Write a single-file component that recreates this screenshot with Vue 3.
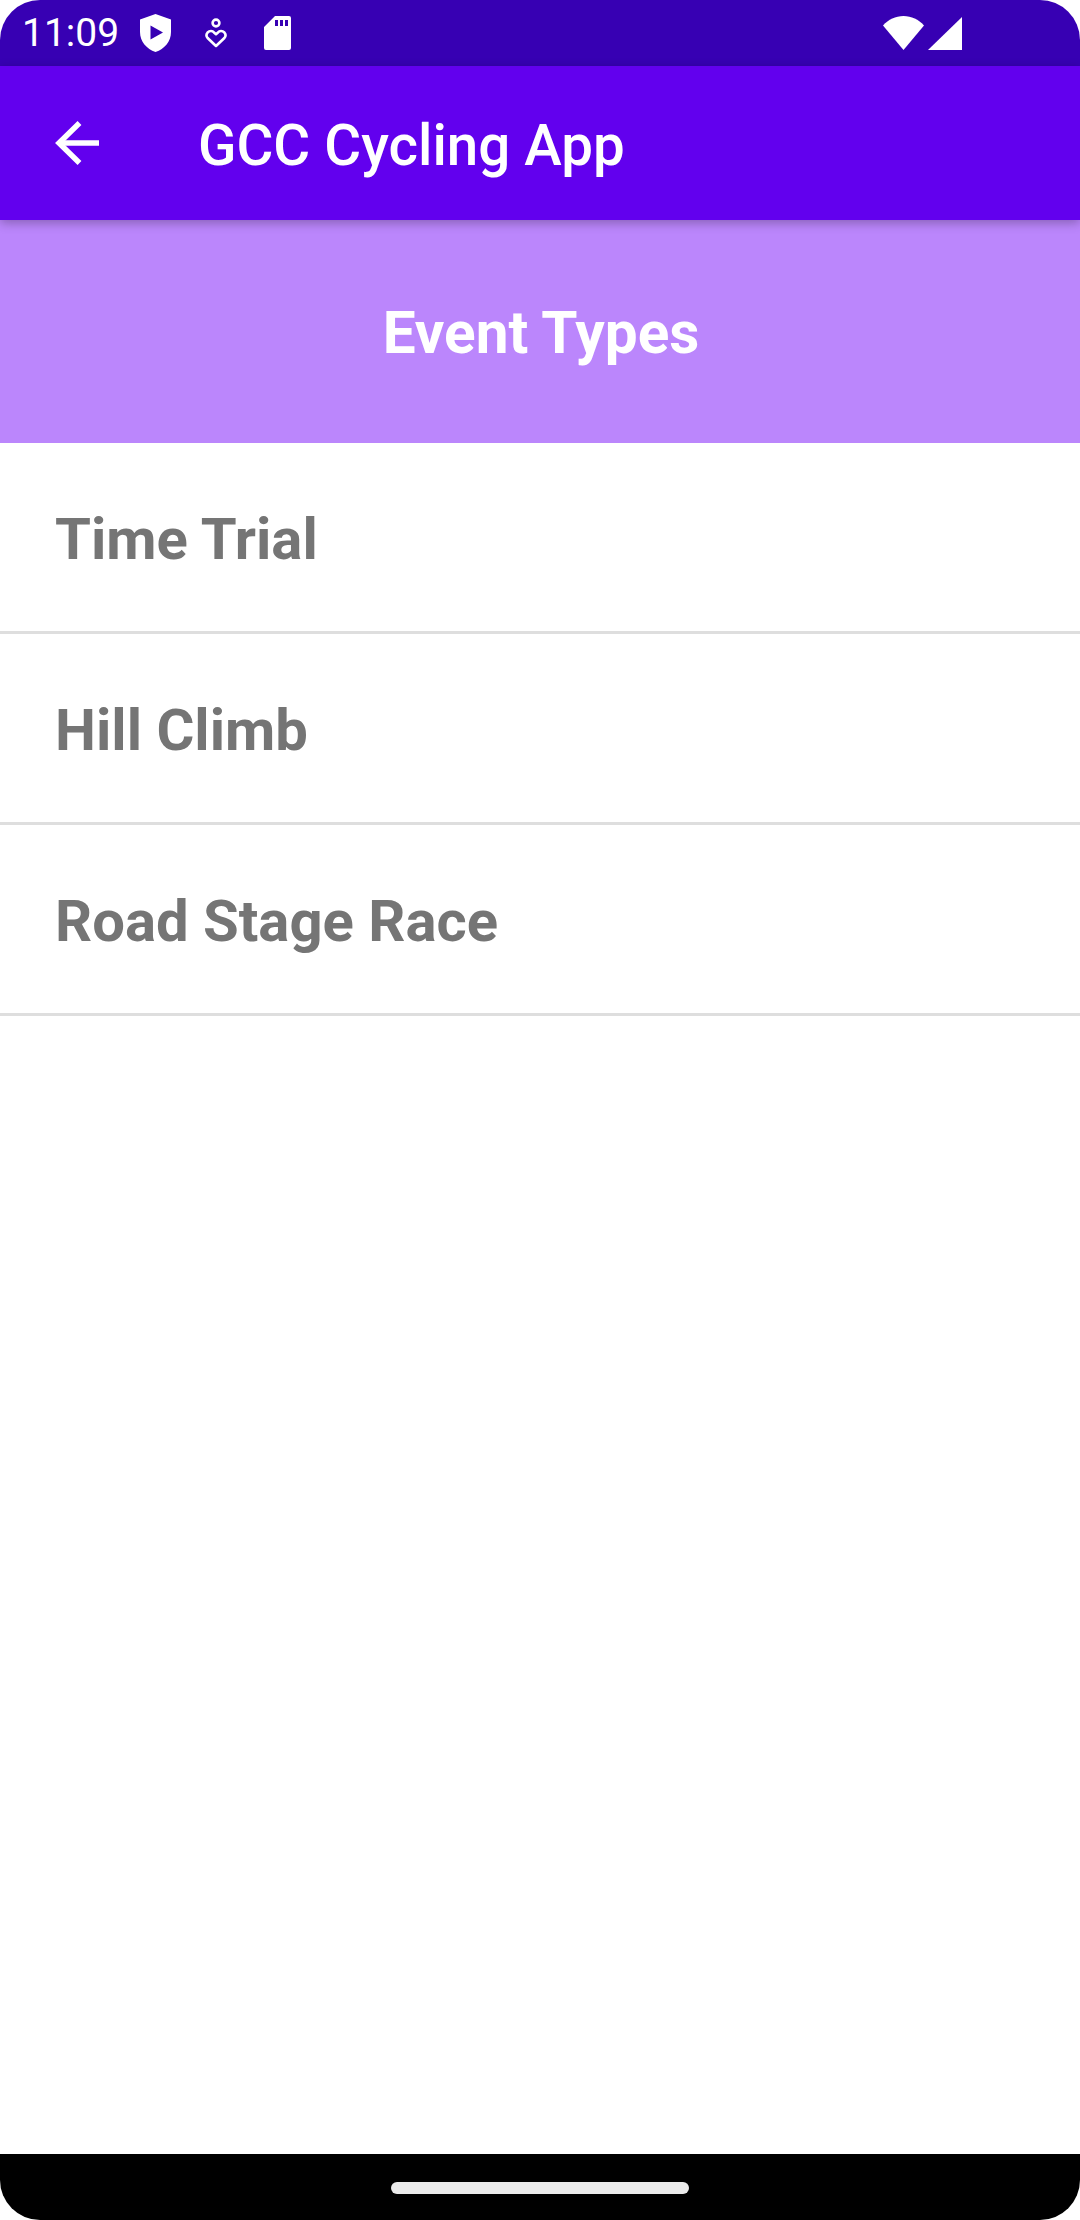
<script setup>
const events = ['Time Trial', 'Hill Climb', 'Road Stage Race']
</script>

<template>
  <div class="screen">
    <div class="status">
      <span class="time">11:09</span>
      <svg class="i-shield" viewBox="0 0 31 38" width="31" height="38">
        <path fill="#fff" fill-rule="evenodd" d="M15.500 0 31 5.500V18c0 9.500-6.500 17-15.500 20C6.500 35 0 27.500 0 18V5.500ZM10.500 11.500v14l12.500-7Z" />
      </svg>
      <svg class="i-heart" viewBox="0 0 22 30" width="22" height="30" fill="none" stroke="#fff" stroke-width="2.600">
        <circle cx="11" cy="5" r="3.400" />
        <path stroke-linejoin="round" d="M11 28 2.600 20a4.300 4.300 0 0 1 0-5.500c2-2 5-1.800 6.400 0l2 1.700 2-1.700c1.400-1.800 4.400-2 6.400 0a4.300 4.300 0 0 1 0 5.500Z" />
      </svg>
      <svg class="i-sd" viewBox="0 0 27 34" width="27" height="34">
        <path fill="#fff" fill-rule="evenodd" d="M11 0H25a2 2 0 0 1 2 2V32a2 2 0 0 1-2 2H2a2 2 0 0 1-2-2V11ZM11 4v6h3V4ZM16 4v6h3V4ZM21 4v6h3V4Z" />
      </svg>
      <span class="spacer"></span>
      <svg class="i-wifi" viewBox="0 0 41 34" width="41" height="34">
        <path fill="#fff" d="M20.500 34 0 9.500C5.500 3.500 12.500 0 20.500 0S35.500 3.500 41 9.500Z" />
      </svg>
      <svg class="i-signal" viewBox="0 0 34 33" width="34" height="33">
        <path fill="#fff" d="M34 0V33H0Z" />
      </svg>
    </div>

    <header class="appbar">
      <svg class="i-back" viewBox="0 0 44 44" width="44" height="44" fill="none" stroke="#fff" stroke-width="5.500">
        <path d="M44 22H4" />
        <path d="M24.500 2 4 22l20.500 20" />
      </svg>
      <h1 class="title">GCC Cycling App</h1>
    </header>

    <div class="heading">Event Types</div>

    <ul class="list">
      <li v-for="name in events" :key="name" class="row">{{ name }}</li>
    </ul>

    <div class="fill"></div>

    <nav class="nav"><span class="pill"></span></nav>
  </div>
</template>

<style scoped>
.screen {
  width: 1080px;
  height: 2220px;
  display: flex;
  flex-direction: column;
  background: #fff;
  overflow: hidden;
  font-family: Roboto, "Liberation Sans", sans-serif;
}
.status {
  height: 66px;
  flex: none;
  display: flex;
  align-items: center;
  padding: 0 118px 0 22px;
  background: #3700b3;
  border-radius: 40px 40px 0 0;
  box-sizing: border-box;
}
.time {
  color: #fff;
  font-size: 39px;
  line-height: 66px;
  width: 118px;
}
.status svg { flex: none; }
.i-shield { margin-top: -1px; }
.i-heart { margin-left: 34px; }
.i-sd { margin-left: 37px; }
.spacer { flex: 1; }
.i-signal { margin-left: 4px; }
.appbar {
  height: 154px;
  flex: none;
  display: flex;
  align-items: center;
  padding-left: 55px;
  background: #6200ee;
  box-sizing: border-box;
  position: relative;
  box-shadow: 0 3px 10px rgba(0, 0, 0, 0.28);
}
.i-back { flex: none; }
.title {
  margin: 6px 0 0 99px;
  font-size: 56.500px;
  font-weight: 500;
  color: #fff;
  line-height: 1;
  white-space: nowrap;
}
.heading {
  height: 223px;
  flex: none;
  display: flex;
  align-items: center;
  justify-content: center;
  padding: 3px 0 0 2px;
  box-sizing: border-box;
  background: #bb86fc;
  color: #fff;
  font-size: 58.500px;
  font-weight: 700;
}
.list {
  list-style: none;
  margin: 0;
  padding: 0;
}
.row {
  height: 191px;
  box-sizing: border-box;
  display: flex;
  align-items: center;
  padding: 4px 0 0 55px;
  color: #757575;
  font-size: 58px;
  font-weight: 700;
  border-bottom: 3px solid #dedede;
}
.fill { flex: 1; }
.nav {
  height: 66px;
  flex: none;
  display: flex;
  align-items: center;
  justify-content: center;
  background: #000;
  border-radius: 0 0 40px 40px;
}
.pill {
  width: 298px;
  height: 12px;
  margin-top: 1px;
  border-radius: 6px;
  background: #ebebeb;
}
</style>
